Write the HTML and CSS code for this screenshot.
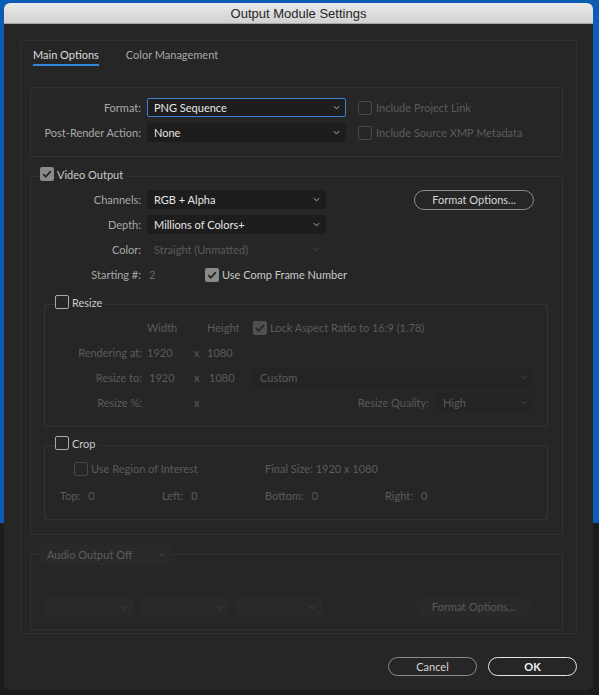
FILE: index.html
```html
<!DOCTYPE html>
<html lang="en">
<head>
    <meta charset="UTF-8">
    <title>Output Module Settings</title>
    <link rel="stylesheet" href="styles.css">
</head>
<body>
    <div class="window">
        <div class="titlebar">Output Module Settings</div>
        <div class="content">
            <div class="panel">
                <div class="tabs">
                    <span class="tab active">Main Options</span>
                    <span class="tab">Color Management</span>
                </div>

                <div class="box format-box">
                    <div class="row">
                        <span class="lbl">Format:</span>
                        <div class="select focus w199"><span>PNG Sequence</span><svg class="chev" viewBox="0 0 8 5"><polyline points="1,1 4,4 7,1"/></svg></div>
                        <span class="cb dis ml12"></span><span class="dim">Include Project Link</span>
                    </div>
                    <div class="row">
                        <span class="lbl">Post-Render Action:</span>
                        <div class="select w199"><span>None</span><svg class="chev" viewBox="0 0 8 5"><polyline points="1,1 4,4 7,1"/></svg></div>
                        <span class="cb dis ml12"></span><span class="dim">Include Source XMP Metadata</span>
                    </div>
                </div>

                <fieldset class="group video">
                    <legend><span class="cb on"><svg viewBox="0 0 14 14"><path d="M3.2 7.2 L5.8 9.8 L10.8 4.2"/></svg></span><span class="txt">Video Output</span></legend>
                    <div class="row">
                        <span class="lbl">Channels:</span>
                        <div class="select w179"><span>RGB + Alpha</span><svg class="chev" viewBox="0 0 8 5"><polyline points="1,1 4,4 7,1"/></svg></div>
                        <button class="btn fmt">Format Options...</button>
                    </div>
                    <div class="row">
                        <span class="lbl">Depth:</span>
                        <div class="select w179"><span>Millions of Colors+</span><svg class="chev" viewBox="0 0 8 5"><polyline points="1,1 4,4 7,1"/></svg></div>
                    </div>
                    <div class="row">
                        <span class="lbl">Color:</span>
                        <div class="select off w179"><span>Straight (Unmatted)</span><svg class="chev" viewBox="0 0 8 5"><polyline points="1,1 4,4 7,1"/></svg></div>
                    </div>
                    <div class="row">
                        <span class="lbl">Starting #:</span>
                        <span class="start-num">2</span>
                        <span class="cb on"><svg viewBox="0 0 14 14"><path d="M3.2 7.2 L5.8 9.8 L10.8 4.2"/></svg></span><span class="txt">Use Comp Frame Number</span>
                    </div>

                    <fieldset class="group sub resize">
                        <legend><span class="cb"></span><span class="txt">Resize</span></legend>
                        <div class="sz-row">
                            <span></span>
                            <span>Width</span>
                            <span></span>
                            <span>Height</span>
                            <span class="lock"><span class="cb on dis"><svg viewBox="0 0 14 14"><path d="M3.2 7.2 L5.8 9.8 L10.8 4.2"/></svg></span>Lock Aspect Ratio to 16:9 (1.78)</span>
                        </div>
                        <div class="sz-row">
                            <span class="sz-lbl">Rendering at:</span>
                            <span>1920</span>
                            <span>x</span>
                            <span>1080</span>
                            <span></span>
                        </div>
                        <div class="sz-row">
                            <span class="sz-lbl">Resize to:</span>
                            <span class="num">1920</span>
                            <span>x</span>
                            <span class="num">1080</span>
                            <div class="select off fill"><span>Custom</span><svg class="chev" viewBox="0 0 8 5"><polyline points="1,1 4,4 7,1"/></svg></div>
                        </div>
                        <div class="sz-row">
                            <span class="sz-lbl">Resize %:</span>
                            <span></span>
                            <span>x</span>
                            <span></span>
                            <div class="quality">
                                <span>Resize Quality:</span>
                                <div class="select off w97"><span>High</span><svg class="chev" viewBox="0 0 8 5"><polyline points="1,1 4,4 7,1"/></svg></div>
                            </div>
                        </div>
                    </fieldset>

                    <fieldset class="group sub crop">
                        <legend><span class="cb"></span><span class="txt">Crop</span></legend>
                        <div class="crop-row">
                            <span class="roi"><span class="cb dis"></span>Use Region of Interest</span>
                            <span>Final Size: 1920 x 1080</span>
                        </div>
                        <div class="crop-row second">
                            <span class="pair"><span>Top:</span><span>0</span></span>
                            <span class="pair"><span>Left:</span><span>0</span></span>
                            <span class="pair"><span>Bottom:</span><span>0</span></span>
                            <span class="pair"><span>Right:</span><span>0</span></span>
                        </div>
                    </fieldset>
                </fieldset>

                <fieldset class="group audio">
                    <legend><div class="select ghost audio-sel"><span>Audio Output Off</span><svg class="chev" viewBox="0 0 8 5"><polyline points="1,1 4,4 7,1"/></svg></div></legend>
                    <div class="audio-row">
                        <div class="select ghost w90"><span></span><svg class="chev" viewBox="0 0 8 5"><polyline points="1,1 4,4 7,1"/></svg></div>
                        <div class="select ghost w89"><span></span><svg class="chev" viewBox="0 0 8 5"><polyline points="1,1 4,4 7,1"/></svg></div>
                        <div class="select ghost w87"><span></span><svg class="chev" viewBox="0 0 8 5"><polyline points="1,1 4,4 7,1"/></svg></div>
                        <span class="ghost-btn">Format Options...</span>
                    </div>
                </fieldset>
            </div>

            <div class="footer">
                <button class="btn">Cancel</button>
                <button class="btn ok">OK</button>
            </div>
        </div>
    </div>
</body>
</html>
```

FILE: styles.css
```css
* {
    box-sizing: border-box;
}
html, body {
    margin: 0;
}
body {
    width: 599px;
    height: 695px;
    overflow: hidden;
    padding-top: 3px;
    background: linear-gradient(#0b5cb5 0, #0b5cb5 523px, #1c1c1c 523px);
    font-family: Lato, "Liberation Sans", sans-serif;
    font-size: 11px;
    color: #a8a8a8;
}
.window {
    margin-left: 4px;
    width: 589px;
    height: 687px;
    background-color: #262626;
    border-radius: 6px;
    overflow: hidden;
}
.titlebar {
    height: 21px;
    line-height: 21px;
    text-align: center;
    font-family: "Liberation Sans", sans-serif;
    font-size: 13px;
    color: #262626;
    background: linear-gradient(#e9e9e9, #d2d2d2);
    border-bottom: 1px solid #a5a5a5;
}
.content {
    padding: 16px 16px 0;
}
.panel {
    border: 1px solid #313131;
    border-radius: 2px;
    padding: 7px 13px 3px 9px;
}
.tabs {
    display: flex;
    gap: 27px;
    margin-left: 3px;
}
.tab {
    line-height: 14px;
    padding-bottom: 2px;
    border-bottom: 2px solid transparent;
    color: #a6a6a6;
}
.tab.active {
    color: #dcdcdc;
    border-bottom-color: #2f86d8;
}
.box {
    border: 1px solid #333;
    border-radius: 2px;
}
.format-box {
    margin-top: 21px;
    padding: 10px 0 14px;
}
.row {
    display: flex;
    align-items: center;
    height: 19px;
}
.row + .row {
    margin-top: 6px;
}
.lbl {
    width: 116px;
    padding-right: 6px;
    text-align: right;
    flex: none;
}
.select {
    display: flex;
    align-items: center;
    justify-content: space-between;
    height: 19px;
    padding: 0 6px 0 7px;
    background-color: #1d1d1d;
    border-radius: 2px;
    color: #e6e6e6;
    flex: none;
}
.select.focus {
    border: 1px solid #3b7fd0;
    padding-left: 6px;
    padding-right: 5px;
}
.select.off {
    background-color: #242424;
    color: #5b5b5b;
}
.select.ghost {
    background-color: #292929;
    color: #5e5e5e;
}
.w199 { width: 199px; }
.w179 { width: 179px; }
.w97 { width: 97px; }
.w90 { width: 90px; }
.w89 { width: 89px; }
.w87 { width: 87px; }
.fill { width: 100%; }
.row .select.off {
    background-color: transparent;
}
.chev {
    width: 7px;
    height: 5px;
    fill: none;
    stroke: #b8b8b8;
    stroke-width: 1.1;
}
.off .chev, .ghost .chev {
    stroke: #4a4a4a;
}
.cb {
    display: inline-flex;
    width: 14px;
    height: 14px;
    border: 1.5px solid #aaaaaa;
    border-radius: 2px;
    flex: none;
}
.cb.on {
    border: none;
    background-color: #8a8a8a;
}
.cb.dis {
    border-color: #474747;
}
.cb.on.dis {
    background-color: #4f4f4f;
}
.cb svg {
    width: 14px;
    height: 14px;
    fill: none;
    stroke: #262626;
    stroke-width: 1.8;
}
.ml12 {
    margin-left: 12px;
    margin-right: 4px;
}
.dim {
    color: #5c5c5c;
}
.txt {
    color: #c9c9c9;
}
.btn {
    height: 19px;
    padding: 0;
    border: 1.5px solid #8b8b8b;
    border-radius: 10px;
    background: transparent;
    font-family: inherit;
    font-size: 11px;
    color: #d6d6d6;
}
.fmt {
    width: 120px;
    height: 20px;
    margin-left: 88px;
}

/* grouped sections */
fieldset.group {
    margin: 10px 0 0;
    padding: 5px 14px 14px 0;
    border: 1px solid #333;
    border-radius: 2px;
    min-width: 0;
}
fieldset.group legend {
    display: flex;
    align-items: center;
    gap: 3px;
    margin-left: 9px;
    padding: 0 4px 4px 0;
}
fieldset.sub {
    margin: 11px 0 0 13px;
    padding: 5px 0 14px 0;
}
fieldset.sub legend {
    margin-left: 10px;
}
.start-num {
    width: 58px;
    padding-left: 2px;
    color: #6a6a6a;
}
.row .cb + .txt {
    margin-left: 3px;
}

/* resize */
.resize {
    color: #5b5b5b;
}
.sz-row {
    display: grid;
    grid-template-columns: 102px 47px 13px 46px 1fr;
    align-items: center;
    height: 19px;
    padding-right: 14px;
}
.sz-row + .sz-row {
    margin-top: 6px;
}
.sz-lbl {
    text-align: right;
    padding-right: 5px;
}
.num {
    padding-left: 2px;
}
.lock {
    display: flex;
    align-items: center;
    gap: 3px;
}
.quality {
    display: flex;
    align-items: center;
    justify-content: flex-end;
    gap: 7px;
}

/* crop */
fieldset.crop {
    color: #5b5b5b;
    margin-top: 9px;
    padding-bottom: 14px;
}
.crop-row {
    display: grid;
    grid-template-columns: 102px 103px 120px 1fr;
    align-items: center;
    height: 19px;
    padding-left: 15px;
}
.crop-row.second {
    margin-top: 8px;
}
.roi {
    grid-column: span 2;
    display: flex;
    align-items: center;
    gap: 3px;
    padding-left: 14px;
}
.pair {
    display: flex;
    gap: 8px;
}

/* audio */
fieldset.audio {
    margin-top: 9px;
    padding-top: 33px;
    padding-bottom: 13px;
}
fieldset.audio legend {
    padding: 0;
    margin-left: 9px;
}
.audio-sel {
    width: 131px;
    height: 21px;
}
.audio-row {
    display: flex;
    align-items: center;
    gap: 6px;
    height: 18px;
    padding-left: 13px;
}
.audio-row .select {
    height: 18px;
}
.ghost-btn {
    width: 115px;
    height: 18px;
    line-height: 18px;
    margin-left: auto;
    margin-right: 17px;
    text-align: center;
    border-radius: 9px;
    background-color: #292929;
    color: #5a5a5a;
}

.footer {
    display: flex;
    justify-content: flex-end;
    gap: 11px;
    margin-top: 23px;
}
.footer .btn {
    width: 89px;
}
.footer .ok {
    border-color: #e4e4e4;
    color: #f2f2f2;
    font-weight: bold;
}
```
